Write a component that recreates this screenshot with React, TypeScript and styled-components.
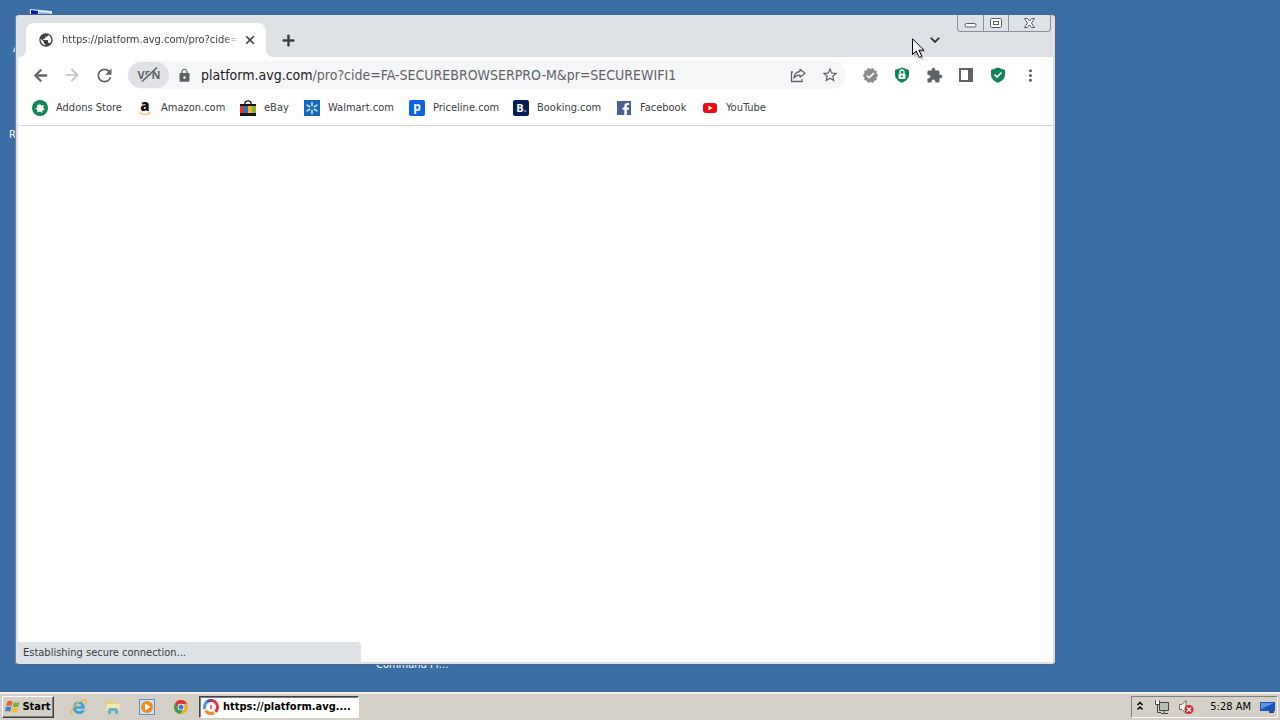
import React from "react";
import styled, { createGlobalStyle, css } from "styled-components";
import {
  MdAdd, MdArrowBack, MdArrowForward, MdClose, MdExtension, MdKeyboardArrowDown,
  MdLock, MdMoreVert, MdPublic, MdRefresh, MdStarBorder, MdVerified,
} from "react-icons/md";

const ui = `Tahoma, "DejaVu Sans Condensed", "Noto Sans", sans-serif`;

const GlobalStyle = createGlobalStyle`
  *, *::before, *::after { box-sizing: border-box; }
  body { margin: 0; font: 11px/16px ${ui}; color: #3c4043; }
  button, input { font: inherit; color: inherit; }
`;

const plain = css`
  border: 0;
  padding: 0;
  background: none;
  display: flex;
  align-items: center;
  justify-content: center;
`;

const Screen = styled.div`
  display: flex;
  flex-direction: column;
  height: 100vh;
  min-height: 320px;
  overflow: hidden;
`;

const Desktop = styled.main`
  position: relative;
  flex: 1;
  overflow: hidden;
  background: #3a6ea5;
`;

const Shortcut = styled.span<{ $x: number; $y: number }>`
  position: absolute;
  left: ${(p) => p.$x}px;
  top: ${(p) => p.$y}px;
  color: #fff;
  white-space: nowrap;
`;

const BrowserWindow = styled.section`
  position: absolute;
  inset: 14px 224px 27px 15px;
  display: flex;
  flex-direction: column;
  padding: 0 2px 2px;
  background: #dee1e6;
  border: 1px solid #4d6683;
  border-left-color: #6d88a5;
  border-radius: 4px;
  overflow: hidden;
`;

const TabStrip = styled.header`
  display: flex;
  align-items: flex-end;
  height: 42px;
  flex-shrink: 0;
  padding-left: 8px;
`;

const Tab = styled.div`
  position: relative;
  display: flex;
  align-items: center;
  width: 240px;
  height: 34px;
  padding: 0 8px 0 12px;
  background: #fff;
  border-radius: 8px 8px 0 0;
  &::before, &::after {
    content: "";
    position: absolute;
    bottom: 0;
    width: 8px;
    height: 8px;
  }
  &::before { left: -8px; background: radial-gradient(circle at 0 0, transparent 8px, #fff 8px); }
  &::after { right: -8px; background: radial-gradient(circle at 100% 0, transparent 8px, #fff 8px); }
`;

const TabTitle = styled.span`
  flex: 1;
  margin: 0 4px 0 8px;
  overflow: hidden;
  white-space: nowrap;
  mask-image: linear-gradient(to right, #000 92%, transparent);
`;

const IconButton = styled.button<{ $size?: number; $color?: string; $bold?: boolean }>`
  ${plain}
  flex-shrink: 0;
  width: ${(p) => p.$size ?? 32}px;
  height: ${(p) => p.$size ?? 32}px;
  color: ${(p) => p.$color ?? "#5f6368"};
  ${(p) => p.$bold && css`path:not([fill="none"]) { stroke: currentColor; stroke-width: 1px; }`}
`;

const NewTab = styled(IconButton)`
  width: 44px;
  height: 34px;
`;

const Spacer = styled.div`
  flex: 1;
`;

const TabSearch = styled(IconButton)`
  height: 34px;
  margin-right: 6px;
`;

const Controls = styled.div`
  display: flex;
  align-self: flex-start;
  height: 17px;
  margin-right: 2px;
  border: 1px solid #8a9098;
  border-top: 0;
  border-radius: 0 0 4px 4px;
`;

const Control = styled.button<{ $wide?: boolean }>`
  ${plain}
  width: ${(p) => (p.$wide ? 42 : 25)}px;
  & + & { border-left: 1px solid #8a9098; }
`;

const Toolbar = styled.div`
  display: flex;
  align-items: center;
  height: 36px;
  flex-shrink: 0;
  padding: 0 7px 0 6px;
  background: #fff;
`;

const Omnibox = styled.div`
  display: flex;
  align-items: center;
  flex: 1;
  height: 28px;
  margin: 0 8px;
  background: #f5f6f8;
  border-radius: 14px;
`;

const VpnButton = styled.button`
  ${plain}
  width: 41px;
  height: 26px;
  margin-right: 8px;
  background: #dfe1e5;
  border-radius: 13px;
`;

const Address = styled.div`
  flex: 1;
  margin-left: 9px;
  font: 14px/20px ${ui};
  white-space: nowrap;
  overflow: hidden;
  color: #5f6368;
  b { font-weight: 400; color: #202124; }
`;

const Bookmarks = styled.nav`
  display: flex;
  align-items: center;
  height: 33px;
  flex-shrink: 0;
  padding: 0 14px 3px;
  background: #fff;
  border-bottom: 1px solid #d5d7da;
`;

const Bookmark = styled.a<{ $width: number }>`
  display: flex;
  align-items: center;
  gap: 8px;
  width: ${(p) => p.$width}px;
  color: inherit;
  text-decoration: none;
  white-space: nowrap;
  svg { flex-shrink: 0; overflow: visible; }
`;

const Page = styled.div`
  display: flex;
  align-items: flex-end;
  flex: 1;
  background: #fff;
`;

const Status = styled.div`
  width: 343px;
  height: 20px;
  padding: 3px 5px 0;
  background: #dee1e6;
  border-top-right-radius: 4px;
`;

const Pointer = styled.svg`
  position: absolute;
  left: 912px;
  top: 38px;
`;

const Taskbar = styled.footer`
  display: flex;
  align-items: center;
  height: 28px;
  flex-shrink: 0;
  padding: 0 2px;
  background: #d4d0c8;
  border-top: 2px solid #f4f3f0;
  color: #000;
`;

const StartButton = styled.button`
  ${plain}
  gap: 1px;
  width: 52px;
  height: 22px;
  border: 1px solid;
  border-color: #fff #404040 #404040 #fff;
  box-shadow: inset -1px -1px #808080;
  font-weight: 700;
`;

const QuickLaunch = styled.div`
  display: flex;
  align-items: center;
  gap: 2px;
  height: 26px;
  margin: 0 2px 0 9px;
`;

const TaskButton = styled.button`
  ${plain}
  justify-content: flex-start;
  gap: 4px;
  width: 160px;
  height: 22px;
  padding-left: 3px;
  background: #fff;
  border: 1px solid;
  border-color: #404040 #fff #fff #404040;
  box-shadow: inset 1px 1px #808080;
  font-weight: 700;
  white-space: nowrap;
`;

const Tray = styled.div`
  display: flex;
  align-items: center;
  gap: 8px;
  height: 22px;
  padding: 0 1px 0 4px;
  border: 1px solid;
  border-color: #808080 #fff #fff #808080;
`;

const Clock = styled.time`
  margin: 0 1px 0 8px;
`;

type MarkName = "addons" | "amazon" | "ebay" | "walmart" | "priceline" | "booking" | "facebook" | "youtube";

const marks: Record<MarkName, React.ReactNode> = {
  addons: (
    <>
      <circle cx="8" cy="8" r="8" fill="#0f8457" />
      <path d="M7.500 3.200 9 5.600l3-.4-.8 2.600 1.800 2-2.600.6-.4 2.600L8 11.400 5.400 12.600 5.300 10 3.200 8.400 5.400 7.200 5 4.600l2.200.9z" fill="#fff" />
    </>
  ),
  amazon: (
    <>
      <text x="8" y="11" textAnchor="middle" fontFamily="Open Sans, sans-serif" fontWeight="800" fontSize="15" fill="#111">a</text>
      <path d="M2.500 12.500q5.500 4 10.500.3" fill="none" stroke="#f0bd6a" strokeWidth="1.300" />
      <path d="M11.500 12.300h2l-.6 1.700" fill="none" stroke="#f0bd6a" strokeWidth=".8" />
    </>
  ),
  ebay: (
    <>
      <path d="M4.800 5V3.400Q5 .8 8 .8t3.200 2.600V5" fill="none" stroke="#222" strokeWidth="1.300" />
      <path d="M0 4h16v12H0z" fill="#151515" />
      <path d="M0 6h4v7H0z" fill="#e0352f" />
      <path d="M4 6h4v7H4z" fill="#1975c9" />
      <path d="M8 6h4v7H8z" fill="#f3b51b" />
      <path d="M12 6h4v7h-4z" fill="#85b72c" />
    </>
  ),
  walmart: (
    <>
      <path d="M0 0h16v16H0z" fill="#1268c4" />
      <path d="M8 2.500v3M8 10.500v3M3.200 5.200l2.600 1.500M10.200 9.300l2.600 1.500M3.200 10.800l2.600-1.500M10.200 6.700l2.600-1.500" stroke="#c4e2cc" strokeWidth="1.700" strokeLinecap="round" />
    </>
  ),
  priceline: (
    <>
      <rect width="16" height="16" rx="2" fill="#0b65e3" />
      <text x="8" y="11" textAnchor="middle" fontFamily="Open Sans, sans-serif" fontWeight="700" fontSize="12" fill="#fff">p</text>
    </>
  ),
  booking: (
    <>
      <rect width="16" height="16" rx="2" fill="#061d55" />
      <text x="7" y="12" textAnchor="middle" fontFamily="Open Sans, sans-serif" fontWeight="700" fontSize="11" fill="#fff">B</text>
      <circle cx="12.300" cy="11.200" r="1.100" fill="#49a6e8" />
    </>
  ),
  facebook: (
    <>
      <path d="M1 1h14v14H1z" fill="#4a5f95" />
      <path d="M8.300 15V9.700H6.500V7.400h1.800V6q0-3 3-3h1.900v2.100h-1.300q-1.100 0-1.100 1.100v1.200h2.300l-.3 2.300h-2V15z" fill="#fff" />
    </>
  ),
  youtube: (
    <>
      <rect x="1" y="3" width="14" height="10" rx="3" fill="#ec0a14" />
      <path d="M6.500 5.500v5L10.500 8z" fill="#fff" />
    </>
  ),
};

const bookmarks: { label: string; mark: MarkName; width: number }[] = [
  { label: "Addons Store", mark: "addons", width: 105 },
  { label: "Amazon.com", mark: "amazon", width: 103 },
  { label: "eBay", mark: "ebay", width: 64 },
  { label: "Walmart.com", mark: "walmart", width: 105 },
  { label: "Priceline.com", mark: "priceline", width: 104 },
  { label: "Booking.com", mark: "booking", width: 103 },
  { label: "Facebook", mark: "facebook", width: 86 },
  { label: "YouTube", mark: "youtube", width: 86 },
];

const Svg = ({ size = 16, children }: { size?: number; children: React.ReactNode }) => (
  <svg width={size} height={size} viewBox="0 0 16 16" fill="none" aria-hidden="true">{children}</svg>
);

const Shield = () => <path d="M8 .4 15 3v4.600c0 3.800-2.800 6.600-7 8.100C3.800 14.200 1 11.400 1 7.600V3z" fill="#0c8457" />;

export default function App() {
  return (
    <Screen>
      <GlobalStyle />
      <Desktop>
        <Shortcut $x={29} $y={8}>
          <svg width="24" height="24" viewBox="0 0 24 24" aria-hidden="true">
            <path d="M1 1l22 2v18H0z" fill="#dce6f4" />
            <path d="M2 2l7 1v12H2z" fill="#0b1f9c" />
            <path d="M10 4l11 1v9H10z" fill="#8fb0e0" />
          </svg>
        </Shortcut>
        <Shortcut $x={13} $y={41}>A</Shortcut>
        <Shortcut $x={9} $y={127}>Recycle Bin</Shortcut>
        <Shortcut $x={376} $y={657}>Command Pr...</Shortcut>

        <BrowserWindow>
          <TabStrip>
            <Tab>
              <MdPublic size={16} />
              <TabTitle>https://platform.avg.com/pro?cide=FA-SECURE</TabTitle>
              <IconButton $size={16} $color="#3c4043" $bold aria-label="Close tab"><MdClose size={14} /></IconButton>
            </Tab>
            <NewTab $color="#3c4043" $bold aria-label="New tab"><MdAdd size={19} /></NewTab>
            <Spacer />
            <TabSearch $color="#3c4043" $bold aria-label="Search tabs"><MdKeyboardArrowDown size={18} /></TabSearch>
            <Controls>
              <Control aria-label="Minimize">
                <svg width="13" height="16" fill="none"><rect x="1" y="8.500" width="11" height="3.500" rx="1.500" fill="#fff" stroke="#555b66" /></svg>
              </Control>
              <Control aria-label="Maximize">
                <svg width="13" height="16" fill="none"><rect x=".5" y="3.500" width="11" height="9" rx="1" fill="#fff" stroke="#555b66" /><rect x="3.500" y="6.500" width="5" height="3" stroke="#555b66" /></svg>
              </Control>
              <Control $wide aria-label="Close">
                <svg width="13" height="16"><path d="M1.500 3.500H4.500L6.500 6l2-2.500h3L8.500 8l3 4.500h-3l-2-2.500-2 2.500h-3L4.500 8z" fill="#fff" stroke="#555b66" /></svg>
              </Control>
            </Controls>
          </TabStrip>

          <Toolbar>
            <IconButton $bold aria-label="Back"><MdArrowBack size={19} /></IconButton>
            <IconButton $color="#bdc1c6" aria-label="Forward"><MdArrowForward size={20} /></IconButton>
            <IconButton aria-label="Reload"><MdRefresh size={21} /></IconButton>
            <Omnibox>
              <VpnButton aria-label="VPN off">
                <svg width="28" height="20" fill="none" aria-hidden="true">
                  <text x="14" y="14" textAnchor="middle" fontFamily="Open Sans, sans-serif" fontWeight="700" fontSize="11" fill="#5f6368">VPN</text>
                  <path d="M8 16 20 3" stroke="#dfe1e5" strokeWidth="3" />
                  <path d="M7 16.500 22 2.500" stroke="#5f6368" strokeWidth="1.700" />
                </svg>
              </VpnButton>
              <MdLock size={15} color="#5f6368" />
              <Address><b>platform.avg.com</b>/pro?cide=FA-SECUREBROWSERPRO-M&amp;pr=SECUREWIFI1</Address>
              <IconButton aria-label="Share">
                <Svg><path d="M3 5H1.500v9.500h10.500V12" stroke="#5f6368" strokeWidth="1.300" /><path d="M10 2.200 15 6.200 10 10.200V8.200Q6 8 3.800 11.200 4.500 5.200 10 4.400z" stroke="#5f6368" strokeWidth="1.200" strokeLinejoin="round" /></Svg>
              </IconButton>
              <IconButton aria-label="Bookmark this page"><MdStarBorder size={18} /></IconButton>
            </Omnibox>
            <IconButton $color="#8b8d90" aria-label="Verified"><MdVerified size={17} /></IconButton>
            <IconButton aria-label="Secure browsing">
              <Svg><Shield /><rect x="4.500" y="6.500" width="7" height="5.500" rx="1" fill="#fff" /><path d="M6 6.500V5a2 2 0 0 1 4 0v1.500" stroke="#fff" strokeWidth="1.300" /><circle cx="8" cy="9.200" r="1" fill="#0c8457" /></Svg>
            </IconButton>
            <IconButton aria-label="Extensions"><MdExtension size={17} /></IconButton>
            <IconButton aria-label="Side panel">
              <Svg><path d="M1 1h14v14H1zM3 3v10h7V3z" fill="#5f6368" fillRule="evenodd" /></Svg>
            </IconButton>
            <IconButton aria-label="Security center">
              <Svg><Shield /><path d="m4.500 7.500 2.500 2.600 4.500-4.600" stroke="#fff" strokeWidth="1.600" /></Svg>
            </IconButton>
            <IconButton aria-label="Menu"><MdMoreVert size={19} /></IconButton>
          </Toolbar>

          <Bookmarks aria-label="Bookmarks">
            {bookmarks.map((b) => (
              <Bookmark key={b.label} href="#" $width={b.width}>
                <Svg>{marks[b.mark]}</Svg>
                {b.label}
              </Bookmark>
            ))}
          </Bookmarks>
          <Page><Status>Establishing secure connection...</Status></Page>
        </BrowserWindow>

        <Pointer width="16" height="24" viewBox="0 0 16 24" aria-hidden="true">
          <path d="M2 3v16l4-4 3 7 3-1-3-7h5z" fill="#000" opacity=".2" />
          <path d="M.5.8v15.700l3.700-3.500 3 6.500 2.600-1.200-2.900-6.200h5z" fill="#fff" stroke="#000" />
        </Pointer>
      </Desktop>

      <Taskbar>
        <StartButton>
          <Svg>
            <path d="M2.500 2.500Q5 1 7.500 2.800L6.500 7.300Q4 5.800 1 7z" fill="#e8622c" />
            <path d="M8.500 3Q11 4.500 14.500 3L13.500 7.500Q10 9 7.500 7.500z" fill="#7ab33c" />
            <path d="M.8 8Q4 6.800 6.200 8.300L5.200 12.800Q3 11.200 0 12.500z" fill="#3c80cf" />
            <path d="M7.200 8.500Q10 10 13.200 8.500L12.200 13Q9 14.500 6.200 13z" fill="#f3bf2c" />
          </Svg>
          Start
        </StartButton>
        <QuickLaunch>
          <IconButton aria-label="Internet Explorer">
            <Svg size={18}>
              <path d="M13 9.500H5.200q.5 2.300 2.800 2.300 1.500 0 2.300-1h2.900Q12 14.300 8 14.300q-5.500-.5-5.500-5.800Q3 3 8 3q5 .3 5.200 6.500M5.300 7.300h5q-.5-2-2.400-2-2 0-2.600 2" fill="#35a3df" />
              <path d="M2.500 14.500Q-1 14 3 8.500 9 1.500 13.500 1.800q2 .4.200 3.700" stroke="#e9b93f" strokeWidth="1.300" />
            </Svg>
          </IconButton>
          <IconButton aria-label="Windows Explorer">
            <Svg>
              <path d="M1 2h5l1.500 1.500H14V13H1z" fill="#e9ce72" />
              <path d="M2 5h13l-1 7H1z" fill="#f8e9a8" />
              <path d="M3 15v-4q0-2 2-2h6q2 0 2 2v4h-3v-3H6v3z" fill="#5fb3d6" />
            </Svg>
          </IconButton>
          <IconButton aria-label="Media Player">
            <Svg>
              <rect x=".5" y=".5" width="15" height="15" fill="#cfe1f4" stroke="#5c8fc8" />
              <circle cx="8" cy="8" r="6" fill="#f08a1c" />
              <path d="M6 4.500v7L11.500 8z" fill="#fff" />
            </Svg>
          </IconButton>
          <IconButton aria-label="Chrome">
            <Svg size={14}>
              <circle cx="8" cy="8" r="8" fill="#e6b71d" />
              <path d="M1 4a8 8 0 0 1 14 0l-7 1-3 5z" fill="#d9382e" />
              <path d="M1 4a8 8 0 0 0 6 12l4-6-6 0z" fill="#3c9b4a" />
              <circle cx="8" cy="8" r="3.800" fill="#fff" />
              <circle cx="8" cy="8" r="2.900" fill="#3b78d8" />
            </Svg>
          </IconButton>
        </QuickLaunch>
        <TaskButton>
          <Svg>
            <circle cx="8" cy="8" r="6" stroke="#e3353e" strokeWidth="4" strokeDasharray="13 25" transform="rotate(-80 8 8)" />
            <circle cx="8" cy="8" r="6" stroke="#4a94d8" strokeWidth="4" strokeDasharray="10 28" transform="rotate(160 8 8)" />
            <circle cx="8" cy="8" r="6" stroke="#7d3f98" strokeWidth="4" strokeDasharray="5 33" transform="rotate(-125 8 8)" />
            <circle cx="8" cy="8" r="6" stroke="#f28b2c" strokeWidth="4" strokeDasharray="9 29" transform="rotate(60 8 8)" />
            <circle cx="8" cy="8" r="5" fill="#fff" />
            <path d="M8 6v4" stroke="#d8434c" strokeWidth="1.500" />
          </Svg>
          https://platform.avg....
        </TaskButton>
        <Spacer />
        <Tray>
          <svg width="10" height="14" fill="none" aria-hidden="true"><path d="m1.500 5 2.500-2.500L6.500 5M1.500 9.500 4 7l2.500 2.500" stroke="#000" strokeWidth="1.500" /></svg>
          <Svg>
            <path d="M5.500 3.500h9v8h-9z" fill="#b9bcb4" stroke="#444" />
            <path d="M7 14.500h7M10 12v2" stroke="#444" />
            <path d="M1.500 1.500v4h4v-4M3.500 5.500v8H7" stroke="#444" />
            <path d="M2 2h3v3H2z" fill="#fff" />
          </Svg>
          <Svg>
            <path d="M1.500 5.500H4L8 1.500v13L4 10.500H1.500z" fill="#f2f0ea" stroke="#6d6a64" />
            <circle cx="11" cy="10.500" r="4.500" fill="#d4282c" />
            <path d="m9 8.500 4 4m0-4-4 4" stroke="#fff" strokeWidth="1.400" />
          </Svg>
          <Clock>5:28 AM</Clock>
          <Svg>
            <path d="M0 3h15v9H0z" fill="#1d55b8" />
            <path d="M1 4h13L1 10z" fill="#5c95e6" />
            <path d="M9 12h5v2H9z" fill="#234a8c" />
          </Svg>
        </Tray>
      </Taskbar>
    </Screen>
  );
}
